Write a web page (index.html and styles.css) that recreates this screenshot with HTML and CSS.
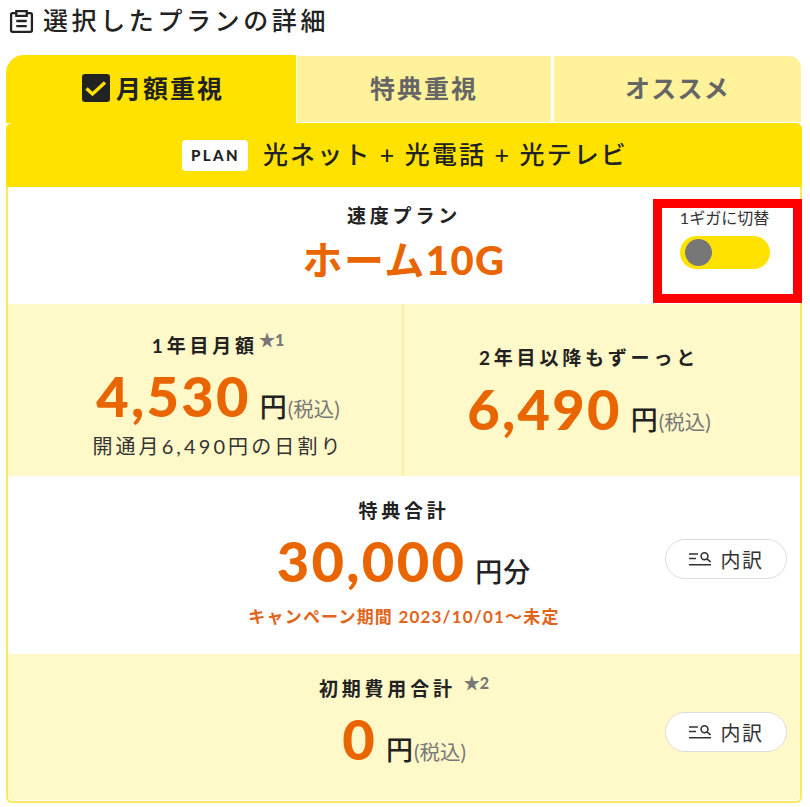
FILE: index.html
```html
<!DOCTYPE html>
<html lang="ja">
<head>
    <meta charset="UTF-8">
    <meta name="viewport" content="width=device-width, initial-scale=1.0">
    <title>選択したプランの詳細</title>
    <link rel="stylesheet" href="styles.css">
</head>
<body>
    <h1 class="page-title">
        <svg class="title-icon" viewBox="0 0 24 24" width="25" height="25" fill="none" stroke="#222" stroke-width="2.200">
            <path d="M7 4H3.500A1.500 1.500 0 0 0 2 5.500v15A1.500 1.500 0 0 0 3.500 22h17a1.500 1.500 0 0 0 1.500-1.500v-15A1.500 1.500 0 0 0 20.500 4H17"/>
            <path d="M7 2h10v4.500H7z"/>
            <path d="M7 11.500h10M7 16.500h10"/>
        </svg>
        選択したプランの詳細
    </h1>

    <div class="tabs">
        <div class="tab tab-active">
            <svg class="check-icon" viewBox="0 0 28 28" width="28" height="28">
                <rect width="28" height="28" rx="3" fill="#222"/>
                <path d="M4.500 14.500l6 5.500L23 8.500" fill="none" stroke="#ffe200" stroke-width="3.400"/>
            </svg>
            月額重視
        </div>
        <div class="tab tab-mid">特典重視</div>
        <div class="tab tab-last">オススメ</div>
    </div>

    <div class="card">
        <div class="plan-header">
            <span class="plan-badge">PLAN</span>
            <span class="plan-name">光ネット + 光電話 + 光テレビ</span>
        </div>

        <div class="speed-row">
            <div class="label">速度プラン</div>
            <div class="speed-name">ホーム<span class="speed-num">10G</span></div>
            <div class="switch-box">
                <div class="switch-label">1ギガに切替</div>
                <div class="switch"><span class="knob"></span></div>
            </div>
        </div>

        <div class="price-row">
            <div class="price-cell">
                <div class="label">1年目月額<span class="note">★1</span></div>
                <div class="price"><span class="num">4,530</span><span class="yen">円</span><span class="tax">(税込)</span></div>
                <div class="sub">開通月6,490円の日割り</div>
            </div>
            <div class="price-cell price-cell-right">
                <div class="label">2年目以降もずーっと</div>
                <div class="price"><span class="num">6,490</span><span class="yen">円</span><span class="tax">(税込)</span></div>
            </div>
        </div>

        <div class="total-row">
            <div class="label">特典合計</div>
            <div class="price"><span class="num">30,000</span><span class="yen">円分</span></div>
            <div class="campaign">キャンペーン期間 2023/10/01～未定</div>
            <button class="detail-btn">
                <svg viewBox="0 0 22 14" width="22" height="14" fill="none" stroke="#333" stroke-width="1.600">
                    <path d="M0 2h9M0 6.500h7M0 12.800h22"/>
                    <circle cx="15.500" cy="4.200" r="3.400"/>
                    <path d="M18 6.800l3.500 3.200"/>
                </svg>
                内訳
            </button>
        </div>

        <div class="initial-row">
            <div class="label">初期費用合計<span class="note note-wide">★2</span></div>
            <div class="price"><span class="num">0</span><span class="yen">円</span><span class="tax">(税込)</span></div>
            <button class="detail-btn">
                <svg viewBox="0 0 22 14" width="22" height="14" fill="none" stroke="#333" stroke-width="1.600">
                    <path d="M0 2h9M0 6.500h7M0 12.800h22"/>
                    <circle cx="15.500" cy="4.200" r="3.400"/>
                    <path d="M18 6.800l3.500 3.200"/>
                </svg>
                内訳
            </button>
        </div>
    </div>
</body>
</html>
```

FILE: styles.css
```css
* {
    box-sizing: border-box;
}

body {
    margin: 0;
    padding: 0 9px 0 6px;
    background-color: white;
    color: #222;
    font-family: Lato, "Noto Sans CJK JP", sans-serif;
}

.page-title {
    display: flex;
    align-items: center;
    gap: 9px;
    height: 55px;
    margin: 0;
    padding: 0 0 18px 3px;
    font-size: 25px;
    font-weight: 500;
    letter-spacing: 3.600px;
}

.title-icon {
    flex: none;
    margin-top: 6px;
}

.tabs {
    display: flex;
    height: 68px;
}

.tab {
    display: flex;
    justify-content: center;
    align-items: center;
    font-size: 25px;
    font-weight: 700;
    letter-spacing: 2px;
    padding-bottom: 4px;
}

.tab-active {
    width: 290px;
    gap: 6px;
    padding-left: 4px;
    background-color: #ffe200;
    border-radius: 18px 0 0 0;
}

.tab-mid,
.tab-last {
    height: 66px;
    margin-top: 1px;
    background-color: #fff29a;
    color: #666;
}

.tab-mid {
    width: 254px;
    margin-left: 1px;
}

.tab-last {
    flex: 1;
    margin-left: 3px;
    border-radius: 0 12px 0 0;
    letter-spacing: 1.200px;
}

.check-icon {
    flex: none;
    margin-top: 2px;
}

.card {
    height: 680px;
    margin-right: -1px;
    border: 2px solid #fbe85c;
    border-top: none;
    border-radius: 6px;
}

.plan-header {
    display: flex;
    justify-content: center;
    align-items: center;
    gap: 15px;
    height: 64px;
    margin: 0 -2px;
    padding-left: 2px;
    background-color: #ffe200;
    border-radius: 6px 6px 0 0;
}

.plan-badge {
    padding: 6px 8px 6px 9px;
    background-color: white;
    border-radius: 4px;
    font-size: 15px;
    font-weight: 900;
    line-height: 19px;
    letter-spacing: 2.400px;
}

.plan-name {
    margin-bottom: 4px;
    font-size: 25px;
    font-weight: 500;
    letter-spacing: 2.100px;
}

.label {
    font-size: 19px;
    font-weight: 700;
    line-height: 26px;
    letter-spacing: 3.800px;
    text-align: center;
}

.speed-row {
    position: relative;
    height: 117px;
    padding-top: 16px;
    text-align: center;
}

.speed-name {
    margin-top: 5px;
    color: #e96500;
    font-size: 40px;
    font-weight: 700;
    line-height: 52px;
    letter-spacing: 1.500px;
}

.speed-num {
    font-weight: 900;
}

.switch-box {
    position: absolute;
    top: 12px;
    right: -2px;
    width: 149px;
    height: 104px;
    padding-right: 6px;
    border: 9px solid #f00;
    background-color: white;
    text-align: center;
}

.switch-label {
    color: #333;
    font-size: 16px;
    line-height: 19px;
}

.switch {
    width: 90px;
    height: 33px;
    margin: 9px auto 0;
    padding: 3px 5px;
    background-color: #ffe200;
    border-radius: 17px;
}

.knob {
    display: block;
    width: 27px;
    height: 27px;
    background-color: #777;
    border-radius: 50%;
}

.price-row {
    display: flex;
    height: 172px;
    background-color: #fff8c8;
}

.price-cell {
    flex: none;
    width: 396px;
    padding: 29px 0 0 26px;
    text-align: center;
    border-right: 2px solid #fcf0a8;
}

.price-cell-right {
    flex: 1;
    padding: 41px 26px 0 0;
    border-right: none;
}

.note {
    position: relative;
    top: -7px;
    margin-left: 1px;
    color: #777;
    font-size: 16px;
    font-weight: 900;
    letter-spacing: 0;
}

.note-wide {
    margin-left: 8px;
}

.price {
    line-height: 66px;
    white-space: nowrap;
}

.price-cell .price {
    margin-top: 3px;
}

.price-cell-right .price {
    margin-top: 5px;
}

.num {
    color: #e96500;
    font-size: 56px;
    font-weight: 900;
    letter-spacing: 2.300px;
}

.yen {
    margin-left: 9px;
    font-size: 27px;
    font-weight: 500;
    letter-spacing: 1px;
}

.tax {
    color: #777;
    font-size: 20.500px;
}

.sub {
    margin-top: -12px;
    color: #333;
    font-size: 20px;
    line-height: 28px;
    letter-spacing: 3.100px;
}

.total-row,
.initial-row {
    position: relative;
    text-align: center;
}

.total-row {
    height: 178px;
    padding-top: 22px;
}

.total-row .price {
    margin-top: 4px;
}

.campaign {
    margin-top: -4px;
    color: #e0651a;
    font-size: 17px;
    font-weight: 700;
    line-height: 24px;
    letter-spacing: 1.200px;
}

.initial-row {
    height: 146px;
    padding-top: 22px;
    background-color: #fff8c8;
    border-radius: 0 0 4px 4px;
}

.initial-row .price {
    margin-top: 3px;
}

.detail-btn {
    position: absolute;
    right: 13px;
    display: flex;
    justify-content: center;
    align-items: center;
    gap: 10px;
    width: 122px;
    height: 40px;
    padding: 0;
    background-color: white;
    border: 1px solid #ddd;
    border-radius: 20px;
    color: #333;
    font-family: inherit;
    font-size: 20px;
    letter-spacing: 1.500px;
}

.total-row .detail-btn {
    top: 63px;
}

.initial-row .detail-btn {
    top: 58px;
}
```
